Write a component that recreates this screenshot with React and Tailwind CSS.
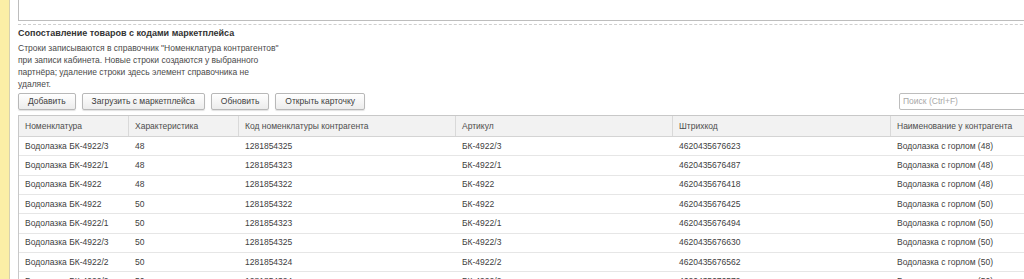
import React from 'react';

const columns = [
  { title: 'Номенклатура', width: 'w-[110px]' },
  { title: 'Характеристика', width: 'w-[110px]' },
  { title: 'Код номенклатуры контрагента', width: 'w-[217px]' },
  { title: 'Артикул', width: 'w-[217px]' },
  { title: 'Штрихкод', width: 'w-[218px]' },
  { title: 'Наименование у контрагента', width: 'w-[240px]' },
];

const rows = [
  ['Водолазка БК-4922/3', '48', '1281854325', 'БК-4922/3', '4620435676623', 'Водолазка с горлом (48)'],
  ['Водолазка БК-4922/1', '48', '1281854323', 'БК-4922/1', '4620435676487', 'Водолазка с горлом (48)'],
  ['Водолазка БК-4922', '48', '1281854322', 'БК-4922', '4620435676418', 'Водолазка с горлом (48)'],
  ['Водолазка БК-4922', '50', '1281854322', 'БК-4922', '4620435676425', 'Водолазка с горлом (50)'],
  ['Водолазка БК-4922/1', '50', '1281854323', 'БК-4922/1', '4620435676494', 'Водолазка с горлом (50)'],
  ['Водолазка БК-4922/3', '50', '1281854325', 'БК-4922/3', '4620435676630', 'Водолазка с горлом (50)'],
  ['Водолазка БК-4922/2', '50', '1281854324', 'БК-4922/2', '4620435676562', 'Водолазка с горлом (50)'],
  ['Водолазка БК-4922/2', '50', '1281854324', 'БК-4922/2', '4620435676579', 'Водолазка с горлом (50)'],
];

const buttons = ['Добавить', 'Загрузить с маркетплейса', 'Обновить', 'Открыть карточку'];

const ToolButton = ({ label }) => (
  <button
    type="button"
    className="h-[17px] px-[9px] rounded-[2px] border border-[#b8b8b8] bg-gradient-to-b from-white to-[#ececec] shadow-[0_1px_1px_rgba(0,0,0,0.12)] text-[#404040] leading-none"
  >
    {label}
  </button>
);

const App = () => {
  return (
    <div
      className="flex w-[1024px] h-[279px] overflow-hidden bg-white text-[8.5px] text-[#404040]"
      style={{ fontFamily: '"Liberation Sans", Arial, sans-serif' }}
    >
      <div className="w-[10px] shrink-0 bg-[#fbeea6] border-r border-[#d6d0b0]" />

      <div className="flex-1 min-w-0 pl-[8px]">
        {/* top text box, cut off */}
        <div className="w-[1100px] h-[21px] border border-t-0 border-[#bdbdbd] bg-white" />
        <div className="w-[1100px] mt-[3px] border-t border-dashed border-[#cfcfcf]" />

        <div className="mt-[2px] h-[13px] leading-[13px] text-[9px] font-bold text-[#333]">
          Сопоставление товаров с кодами маркетплейса
        </div>

        <div className="mt-[2px] leading-[12px] text-[#4a4a4a] whitespace-nowrap">
          <div>Строки записываются в справочник "Номенклатура контрагентов"</div>
          <div>при записи кабинета. Новые строки создаются у выбранного</div>
          <div>партнёра; удаление строки здесь элемент справочника не</div>
          <div>удаляет.</div>
        </div>

        <div className="mt-[3px] w-[1050px] flex items-center">
          <div className="flex gap-[6px]">
            {buttons.map((b) => (
              <ToolButton key={b} label={b} />
            ))}
          </div>
          <div className="ml-auto w-[169px] h-[17px] border border-[#bdbdbd] rounded-[2px] pl-[3px] flex items-center text-[#a8a8a8] bg-white">
            Поиск (Ctrl+F)
          </div>
        </div>

        <div className="mt-[5px] w-[1120px] border-l border-t border-[#c8c8c8]">
          <div className="flex h-[21px] bg-[#f2f2f2] border-b border-[#d4d4d4] text-[#4d4d4d]">
            {columns.map((c) => (
              <div
                key={c.title}
                className={`${c.width} shrink-0 px-[6px] flex items-center border-r border-[#d9d9d9]`}
              >
                {c.title}
              </div>
            ))}
          </div>
          {rows.map((r, i) => (
            <div key={i} className="flex h-[19.33px] border-b border-[#e6e6e6]">
              {r.map((cell, j) => (
                <div
                  key={j}
                  className={`${columns[j].width} shrink-0 px-[6px] flex items-center whitespace-nowrap`}
                >
                  {cell}
                </div>
              ))}
            </div>
          ))}
        </div>
      </div>
    </div>
  );
};

export default App;
